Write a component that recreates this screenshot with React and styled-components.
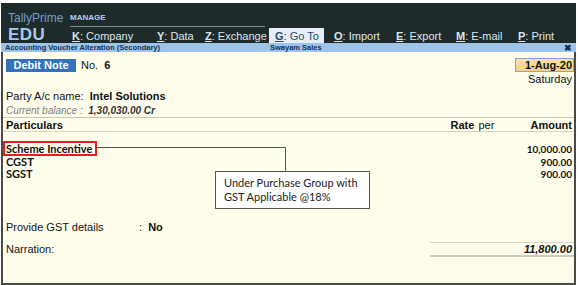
import React from "react";
import styled, { createGlobalStyle } from "styled-components";

const Global = createGlobalStyle`
  html, body { margin: 0; padding: 0; background: #ffffff; }
  body { font-family: "Liberation Sans", Arial, sans-serif; }
`;

const Frame = styled.div`
  width: 575px;
  margin: 3px 0 0 1px;
  display: flex;
  flex-direction: column;
`;

const Header = styled.div`
  height: 40px;
  background: #1f2b2a;
  display: flex;
  align-items: stretch;
`;

const Brand = styled.div`
  width: 62px;
  padding: 0 0 0 7px;
  display: flex;
  flex-direction: column;
  justify-content: flex-end;
`;

const BrandName = styled.div`
  color: #6f9fcc;
  font-size: 12px;
  line-height: 14px;
`;

const BrandEdu = styled.div`
  color: #a6cbf0;
  font-size: 17px;
  font-weight: bold;
  line-height: 17px;
  letter-spacing: 0.5px;
  margin-top: 1px;
`;

const MenuArea = styled.div`
  flex: 1;
  display: flex;
  flex-direction: column;
  justify-content: flex-end;
`;

const MenuLabel = styled.div`
  width: 195px;
  color: #b7d0ea;
  font-size: 8px;
  font-weight: bold;
  padding: 0 0 4px 0;
  border-bottom: 1px solid #7d8c8c;
  margin-bottom: 1px;
`;

const MenuRow = styled.div`
  display: flex;
  align-items: center;
  height: 15px;
`;

const MenuItem = styled.div`
  width: ${(p) => p.w}px;
  flex: none;
  height: 15px;
  display: flex;
  align-items: center;
  padding-left: ${(p) => (p.active ? 6 : 2)}px;
  padding-top: 1px;
  box-sizing: border-box;
  font-size: 11px;
  color: ${(p) => (p.active ? "#2a4a6a" : "#dce6ee")};
  background: ${(p) => (p.active ? "#e6eef7" : "transparent")};
  margin-right: ${(p) => p.gap || 0}px;
  white-space: nowrap;
`;

const Key = styled.span`
  text-decoration: underline;
  font-weight: bold;
`;

const TitleBar = styled.div`
  height: 9px;
  background: #9dc4e9;
  display: flex;
  align-items: center;
  font-size: 7.5px;
  font-weight: bold;
  color: #13305a;
  padding: 0 4px 0 4px;
`;

const TitleLeft = styled.div`
  width: 265px;
`;

const TitleMid = styled.div`
  flex: 1;
`;

const Close = styled.div`
  font-size: 9px;
  color: #102a50;
`;

const Body = styled.div`
  position: relative;
  height: 231px;
  background: #fffeec;
  border-left: 2px solid #4a4a4a;
  border-right: 2px solid #4a4a4a;
  border-bottom: 2px solid #4a4a4a;
  font-size: 11px;
  color: #111;
  display: flex;
  flex-direction: column;
`;

const VoucherRow = styled.div`
  display: flex;
  align-items: center;
  margin-top: 6px;
  padding-left: 3px;
  height: 14px;
`;

const VType = styled.div`
  width: 70px;
  height: 13px;
  background: #3472bd;
  color: #fff;
  font-weight: bold;
  font-size: 11px;
  display: flex;
  align-items: center;
  justify-content: center;
  margin-right: 5px;
`;

const Spacer = styled.div`
  flex: 1;
`;

const DateBox = styled.div`
  width: 59px;
  height: 14px;
  box-sizing: border-box;
  border: 1px solid #7ea9d6;
  background: linear-gradient(#fde0a8, #f9d08a);
  font-weight: bold;
  text-align: right;
  padding-right: 1px;
  line-height: 12px;
`;

const DayRow = styled.div`
  text-align: right;
  padding-right: 2px;
  margin-top: 1px;
  height: 12px;
  line-height: 12px;
`;

const PartyRow = styled.div`
  padding-left: 3px;
  margin-top: 5px;
  height: 13px;
  line-height: 13px;
`;

const Bold = styled.span`
  font-weight: bold;
`;

const BalanceRow = styled.div`
  padding-left: 3px;
  margin-top: 2px;
  height: 12px;
  line-height: 12px;
  font-size: 10px;
  font-style: italic;
  color: #808080;
  b { color: #333; font-weight: bold; }
`;

const ColHead = styled.div`
  margin-top: 0;
  height: 13px;
  border-top: 1px solid #c9c6b0;
  border-bottom: 1px solid #d6d3bb;
  display: flex;
  align-items: center;
  padding: 0 2px 0 3px;
  font-weight: bold;
`;

const RateCol = styled.div`
  width: 28px;
  font-weight: bold;
`;

const PerCol = styled.div`
  width: 52px;
  font-weight: normal;
`;

const Entries = styled.div`
  margin-top: 11px;
  display: flex;
  flex-direction: column;
`;

const Entry = styled.div`
  display: flex;
  justify-content: space-between;
  padding: 0 2px 0 3px;
  height: 12.5px;
  line-height: 12.5px;
  font-family: Lato, "Liberation Sans", sans-serif;
  font-weight: bold;
  font-size: 11px;
`;

const Amt = styled.span`
  font-size: 10px;
`;

const GstRow = styled.div`
  margin-top: 40px;
  padding-left: 3px;
  display: flex;
  height: 13px;
  line-height: 13px;
`;

const GstLabel = styled.div`
  width: 133px;
`;

const NarrRow = styled.div`
  margin-top: 8px;
  display: flex;
  align-items: center;
  padding-left: 3px;
`;

const Total = styled.div`
  margin-left: auto;
  width: 142px;
  height: 12px;
  border-top: 1px solid #d8d6c4;
  border-bottom: 2px solid #cfcdb9;
  text-align: right;
  font-weight: bold;
  font-style: italic;
  line-height: 12px;
  padding-right: 2px;
`;

const Highlight = styled.div`
  position: absolute;
  left: 0;
  top: 89px;
  width: 90px;
  height: 11px;
  border: 2px solid #e02020;
`;

const Connector = styled.svg`
  position: absolute;
  left: 94px;
  top: 95px;
  overflow: visible;
`;

const Callout = styled.div`
  position: absolute;
  left: 212px;
  top: 119px;
  width: 155px;
  height: 38px;
  box-sizing: border-box;
  background: #fff;
  border: 1px solid #555;
  font-family: Lato, "Open Sans", sans-serif;
  font-size: 11px;
  color: #222;
  padding: 4px 0 0 8px;
  line-height: 14px;
`;

const menu = [
  { k: "K", t: "Company", w: 85 },
  { k: "Y", t: "Data", w: 48 },
  { k: "Z", t: "Exchange", w: 64, gap: 2 },
  { k: "G", t: "Go To", w: 55, active: true, gap: 8 },
  { k: "O", t: "Import", w: 62 },
  { k: "E", t: "Export", w: 60 },
  { k: "M", t: "E-mail", w: 62 },
  { k: "P", t: "Print", w: 50 },
];

export default function App() {
  return (
    <>
      <Global />
      <Frame>
        <Header>
          <Brand>
            <BrandName>TallyPrime</BrandName>
            <BrandEdu>EDU</BrandEdu>
          </Brand>
          <MenuArea>
            <MenuLabel>MANAGE</MenuLabel>
            <MenuRow>
              {menu.map((m) => (
                <MenuItem key={m.k} w={m.w} active={m.active} gap={m.gap}>
                  <Key>{m.k}</Key>:&nbsp;{m.t}
                </MenuItem>
              ))}
            </MenuRow>
          </MenuArea>
        </Header>
        <TitleBar>
          <TitleLeft>Accounting Voucher Alteration (Secondary)</TitleLeft>
          <TitleMid>Swayam Sales</TitleMid>
          <Close>✖</Close>
        </TitleBar>
        <Body>
          <VoucherRow>
            <VType>Debit Note</VType>
            <span>
              No.&nbsp;&nbsp;<Bold>6</Bold>
            </span>
            <Spacer />
            <DateBox>1-Aug-20</DateBox>
          </VoucherRow>
          <DayRow>Saturday</DayRow>
          <PartyRow>
            Party A/c name:&nbsp; <Bold>Intel Solutions</Bold>
          </PartyRow>
          <BalanceRow>
            Current balance :&nbsp; <b>1,30,030.00 Cr</b>
          </BalanceRow>
          <ColHead>
            <span>Particulars</span>
            <Spacer />
            <RateCol>Rate</RateCol>
            <PerCol>per</PerCol>
            <span>Amount</span>
          </ColHead>
          <Entries>
            <Entry>
              <span>Scheme Incentive</span>
              <Amt>10,000.00</Amt>
            </Entry>
            <Entry>
              <span>CGST</span>
              <Amt>900.00</Amt>
            </Entry>
            <Entry>
              <span>SGST</span>
              <Amt>900.00</Amt>
            </Entry>
          </Entries>
          <GstRow>
            <GstLabel>Provide GST details</GstLabel>
            <span>
              :&nbsp; <Bold>No</Bold>
            </span>
          </GstRow>
          <NarrRow>
            <span>Narration:</span>
            <Total>11,800.00</Total>
          </NarrRow>
          <Highlight />
          <Connector width="190" height="30">
            <polyline
              points="0,0.5 188.5,0.5 188.5,24"
              fill="none"
              stroke="#555"
              strokeWidth="1"
            />
          </Connector>
          <Callout>
            Under Purchase Group with
            <br />
            GST Applicable @18%
          </Callout>
        </Body>
      </Frame>
    </>
  );
}
